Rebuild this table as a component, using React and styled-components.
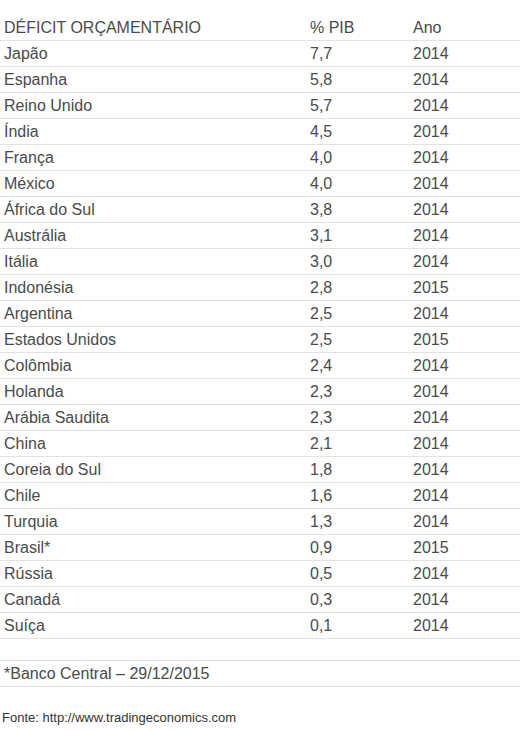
import React from 'react';
import styled, { createGlobalStyle } from 'styled-components';

const rows = [
  ['Japão', '7,7', '2014'],
  ['Espanha', '5,8', '2014'],
  ['Reino Unido', '5,7', '2014'],
  ['Índia', '4,5', '2014'],
  ['França', '4,0', '2014'],
  ['México', '4,0', '2014'],
  ['África do Sul', '3,8', '2014'],
  ['Austrália', '3,1', '2014'],
  ['Itália', '3,0', '2014'],
  ['Indonésia', '2,8', '2015'],
  ['Argentina', '2,5', '2014'],
  ['Estados Unidos', '2,5', '2015'],
  ['Colômbia', '2,4', '2014'],
  ['Holanda', '2,3', '2014'],
  ['Arábia Saudita', '2,3', '2014'],
  ['China', '2,1', '2014'],
  ['Coreia do Sul', '1,8', '2014'],
  ['Chile', '1,6', '2014'],
  ['Turquia', '1,3', '2014'],
  ['Brasil*', '0,9', '2015'],
  ['Rússia', '0,5', '2014'],
  ['Canadá', '0,3', '2014'],
  ['Suíça', '0,1', '2014'],
];

const Global = createGlobalStyle`
  body {
    margin: 0;
    background: #fff;
    font-family: "Liberation Sans", Arial, sans-serif;
    color: #4a4a4a;
  }
`

const Wrapper = styled.div`
  padding-top: 15px;
  width: 520px;
`

const Table = styled.table`
  width: 520px;
  border-collapse: collapse;
  font-size: 16px;
`

const Cell = styled.td`
  height: 25px;
  padding: 0 4px;
  line-height: 25px;
  width: ${props => props.w || 'auto'};
  vertical-align: middle;
`

const Row = styled.tr`
  border-bottom: 1px solid #e2e2e2;
`

const Note = styled.div`
  height: 25px;
  line-height: 25px;
  padding: 0 4px;
  font-size: 16px;
  border-bottom: 1px solid #e2e2e2;
`

const Spacer = styled.div`
  height: 21px;
  border-bottom: 1px solid #e2e2e2;
`

const Source = styled.p`
  margin: 0;
  padding: 23px 2px 0;
  font-size: 13px;
  color: #333;
`

const App = () => {
  return (
    <Wrapper>
      <Global />
      <Table>
        <tbody>
          <Row>
            <Cell w="298px">DÉFICIT ORÇAMENTÁRIO</Cell>
            <Cell w="95px">% PIB</Cell>
            <Cell>Ano</Cell>
          </Row>
          {rows.map(r => (
            <Row key={r[0]}>
              <Cell>{r[0]}</Cell>
              <Cell>{r[1]}</Cell>
              <Cell>{r[2]}</Cell>
            </Row>
          ))}
        </tbody>
      </Table>
      <Spacer />
      <Note>*Banco Central – 29/12/2015</Note>
      <Source>Fonte: http://www.tradingeconomics.com</Source>
    </Wrapper>
  )
}

export default App
